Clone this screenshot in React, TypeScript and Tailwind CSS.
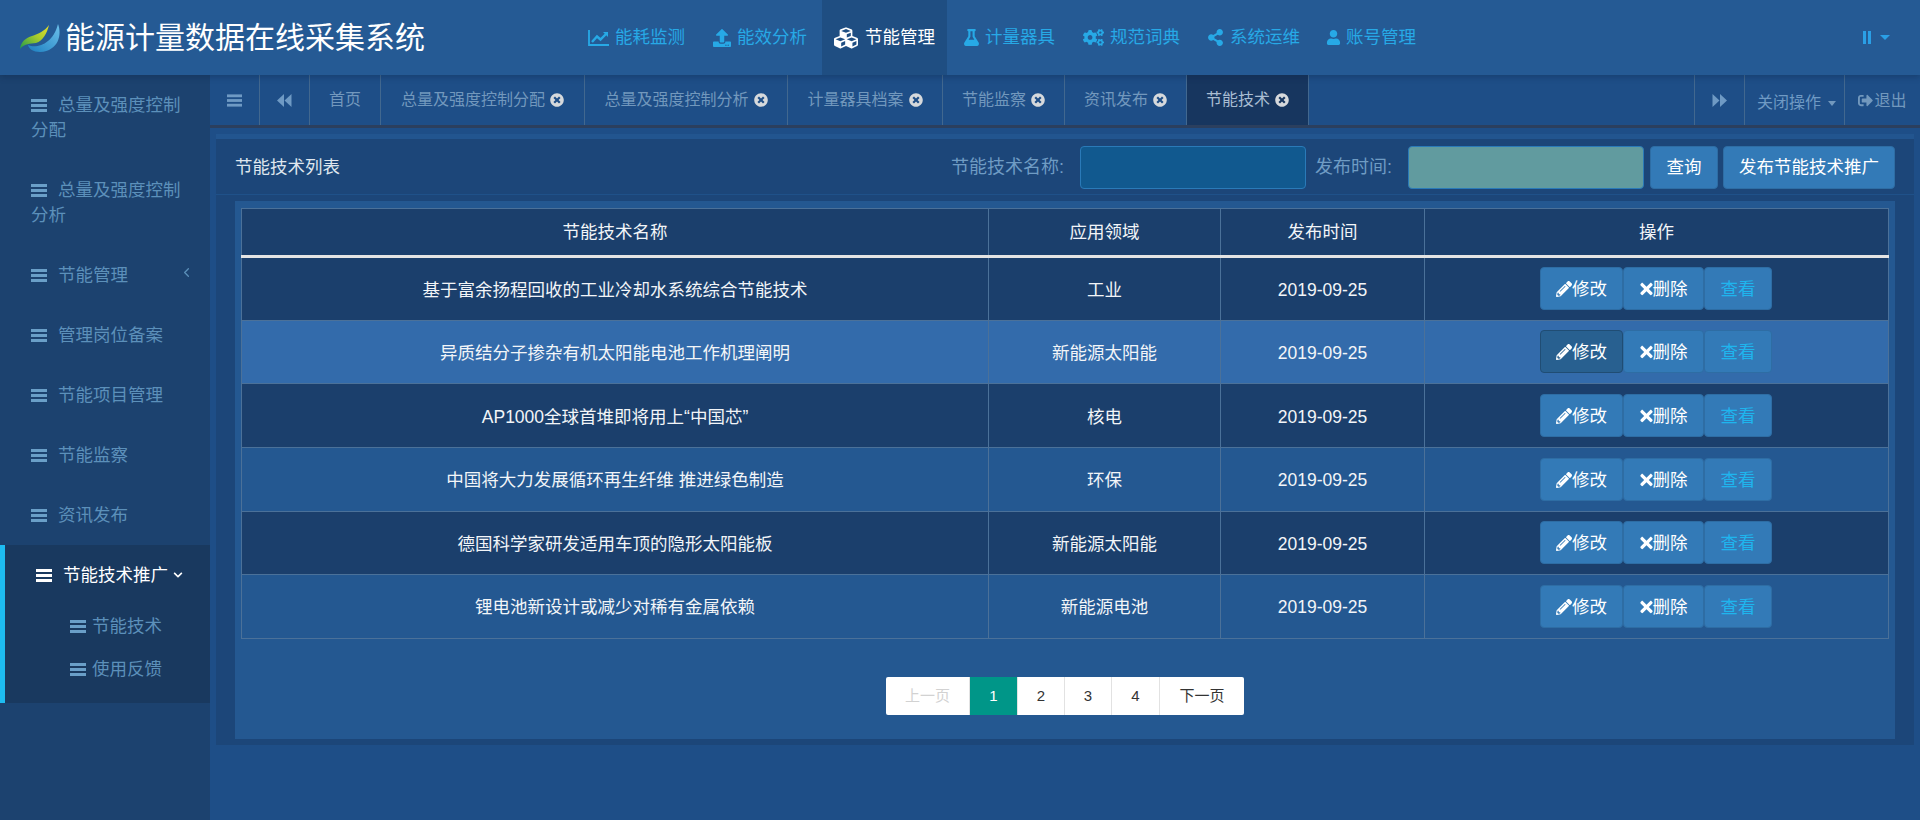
import type { ReactNode } from "react";
import {
  FaChevronDown,
  FaCogs,
  FaCubes,
  FaFlask,
  FaPencilAlt,
  FaShareAlt,
  FaSignOutAlt,
  FaTimes,
  FaTimesCircle,
  FaUpload,
  FaUser,
} from "react-icons/fa";
import { LuChevronLeft } from "react-icons/lu";

const rows = [
  ["基于富余扬程回收的工业冷却水系统综合节能技术", "工业"],
  ["异质结分子掺杂有机太阳能电池工作机理阐明", "新能源太阳能"],
  ["AP1000全球首堆即将用上“中国芯”", "核电"],
  ["中国将大力发展循环再生纤维 推进绿色制造", "环保"],
  ["德国科学家研发适用车顶的隐形太阳能板", "新能源太阳能"],
  ["锂电池新设计或减少对稀有金属依赖", "新能源电池"],
];

const Logo = () => (
  <svg width="44" height="30" viewBox="0 0 44 30" className="shrink-0">
    <defs>
      <linearGradient id="blueLeaf" x1="0" y1="1" x2="1" y2="0">
        <stop offset="0" stopColor="#1c7fc0" />
        <stop offset="1" stopColor="#6cc0ea" />
      </linearGradient>
      <linearGradient id="greenLeaf" x1="0" y1="1" x2="1" y2="0">
        <stop offset="0" stopColor="#1f9a4c" />
        <stop offset="0.55" stopColor="#a8cc2c" />
        <stop offset="1" stopColor="#e6dd2e" />
      </linearGradient>
    </defs>
    <path d="M40 1C44 11 41 28 22 29C15 29 11 26 10 22C19 26 35 21 40 1Z" fill="url(#blueLeaf)" />
    <path d="M31 2C27 8 20 11 14 13C8 15 3 18 2 26C7 20 12 21 18 20C25 18 29 10 31 2Z" fill="url(#greenLeaf)" />
  </svg>
);

const Bars = ({ className }: { className?: string }) => (
  <svg viewBox="0 0 16 13" fill="currentColor" className={className}>
    <rect y="0" width="16" height="3" />
    <rect y="5" width="16" height="3" />
    <rect y="10" width="16" height="3" />
  </svg>
);

const Skip = ({ flip }: { flip?: boolean }) => (
  <svg viewBox="0 0 15 13" fill="currentColor" className={`h-[13px] w-[15px] ${flip ? "rotate-180" : ""}`}>
    <polygon points="7,0 7,13 0,6.5" />
    <polygon points="14.5,0 14.5,13 7.5,6.5" />
  </svg>
);

const ChartLine = () => (
  <svg viewBox="0 0 21 16" fill="none" stroke="currentColor" className="mr-[6px] h-[16px] w-[21px]">
    <path d="M1 0V15H21" strokeWidth="1.8" />
    <path d="M4 12L9 6.5L12.5 9.5L18 4" strokeWidth="2.4" />
    <polygon points="15,2 20,2 20,7" fill="currentColor" stroke="none" />
  </svg>
);

const NavItem = ({ icon, label, active, className }: { icon: ReactNode; label: string; active?: boolean; className: string }) => (
  <div className={`flex h-[75px] shrink-0 items-center ${active ? "bg-[#1f4e82] text-white" : "text-[#27a9e6]"} ${className}`}>
    {icon}
    <span className="text-[17.5px]">{label}</span>
  </div>
);

const SideItem = ({ label, chevron }: { label: string; chevron?: boolean }) => (
  <div className="relative pb-[17px] pl-[31px] pr-[20px] pt-[18px] text-[17.5px] leading-[25px] text-[#5c90ba]">
    <Bars className="mr-[11px] inline-block h-[13px] w-[16px] align-[-1px] text-[#6a9fc8]" />
    {label}
    {chevron && <LuChevronLeft className="absolute right-[16px] top-[20px] h-[15px] w-[15px]" />}
  </div>
);

const Tab = ({ label, active, className }: { label: string; active?: boolean; className: string }) => (
  <div
    className={`flex h-[50px] items-center justify-center gap-[5px] border-r border-[#42688f] text-[16px] ${
      active ? "bg-[#17365f] text-[#a9bdd2]" : "text-[#7298bd]"
    } ${className}`}
  >
    <span>{label}</span>
    <FaTimesCircle className="h-[14px] w-[14px] text-[#d6d9dc]" />
  </div>
);

const TabButton = ({ children, className }: { children: ReactNode; className: string }) => (
  <div className={`flex h-[50px] items-center justify-center border-r border-[#42688f] text-[16px] text-[#6f9ac4] ${className}`}>
    {children}
  </div>
);

const ActionButton = ({ children, hover, className }: { children: ReactNode; hover?: boolean; className: string }) => (
  <button
    className={`flex h-[43px] items-center justify-center rounded-[4px] border pt-[1px] text-[17.5px] ${
      hover ? "border-[#204d74] bg-[#286090]" : "border-[#2e6da4] bg-[#337ab7]"
    } ${className}`}
  >
    {children}
  </button>
);

const PageCell = ({ children, className }: { children: ReactNode; className: string }) => (
  <div className={`flex h-[38px] items-center justify-center border-r border-[#e2e2e2] text-[15px] ${className}`}>
    {children}
  </div>
);

export default function App() {
  return (
    <div
      className="flex h-[820px] w-[1920px] flex-col overflow-hidden bg-[#1e4e87]"
      style={{ fontFamily: '"Liberation Sans", "Noto Sans CJK SC", sans-serif' }}
    >
      <header className="relative z-10 flex h-[75px] shrink-0 items-center bg-[#255a94] shadow-[0_2px_6px_rgba(10,30,60,0.3)]">
        <div className="flex w-[575px] shrink-0 items-center pl-[18px]">
          <Logo />
          <span className="ml-[3px] text-[30px] text-white">能源计量数据在线采集系统</span>
        </div>
        <NavItem className="w-[125px] pl-[13px]" icon={<ChartLine />} label="能耗监测" />
        <NavItem className="w-[122px] pl-[13px]" icon={<FaUpload className="mr-[6px] h-[18px] w-[18px]" />} label="能效分析" />
        <NavItem active className="w-[125px] pl-[12px]" icon={<FaCubes className="mr-[7px] h-[24px] w-[24px]" />} label="节能管理" />
        <NavItem className="w-[123px] pl-[16px]" icon={<FaFlask className="mr-[5px] h-[17px] w-[17px]" />} label="计量器具" />
        <NavItem className="w-[124px] pl-[13px]" icon={<FaCogs className="mr-[6px] h-[21px] w-[21px]" />} label="规范词典" />
        <NavItem className="w-[119px] pl-[13px]" icon={<FaShareAlt className="mr-[6px] h-[17px] w-[17px]" />} label="系统运维" />
        <NavItem className="pl-[13px]" icon={<FaUser className="mr-[5px] h-[15px] w-[15px]" />} label="账号管理" />
        <div className="ml-auto mr-[30px] flex items-center">
          <span className="h-[13px] w-[3px] bg-[#2a9fe6]" />
          <span className="ml-[2px] h-[13px] w-[3px] bg-[#2a9fe6]" />
          <span className="ml-[9px] h-0 w-0 border-x-[5px] border-t-[5px] border-x-transparent border-t-[#2a9fe6]" />
        </div>
      </header>

      <div className="flex min-h-0 flex-1">
        <aside className="w-[210px] shrink-0 bg-[#1c426f]">
          <SideItem label="总量及强度控制分配" />
          <SideItem label="总量及强度控制分析" />
          <SideItem label="节能管理" chevron />
          <SideItem label="管理岗位备案" />
          <SideItem label="节能项目管理" />
          <SideItem label="节能监察" />
          <SideItem label="资讯发布" />
          <div className="relative h-[158px] border-l-[5px] border-[#1dbcf2] bg-[#19395f]">
            <div className="flex h-[60px] items-center pl-[31px] text-[17.5px] text-white">
              <Bars className="mr-[11px] h-[13px] w-[16px]" />
              节能技术推广
              <FaChevronDown className="ml-[5px] h-[10px] w-[10px]" />
            </div>
            <div className="flex h-[43px] items-center pl-[65px] text-[17.5px] text-[#5c90ba]">
              <Bars className="mr-[6px] h-[13px] w-[16px] text-[#6a9fc8]" />
              节能技术
            </div>
            <div className="flex h-[43px] items-center pl-[65px] text-[17.5px] text-[#5c90ba]">
              <Bars className="mr-[6px] h-[13px] w-[16px] text-[#6a9fc8]" />
              使用反馈
            </div>
          </div>
        </aside>

        <main className="min-w-0 flex-1">
          <div className="flex h-[53px] border-b-[3px] border-[#2b3f5e] bg-[#1e4e87]">
            <TabButton className="w-[50px]"><Bars className="h-[13px] w-[15px]" /></TabButton>
            <TabButton className="w-[50px]"><Skip /></TabButton>
            <TabButton className="w-[71px] text-[#7298bd]">首页</TabButton>
            <Tab className="w-[204px]" label="总量及强度控制分配" />
            <Tab className="w-[203px]" label="总量及强度控制分析" />
            <Tab className="w-[155px]" label="计量器具档案" />
            <Tab className="w-[122px]" label="节能监察" />
            <Tab className="w-[122px]" label="资讯发布" />
            <Tab active className="w-[122px]" label="节能技术" />
            <div className="h-[50px] flex-1 border-r border-[#42688f]" />
            <TabButton className="w-[50px]"><Skip flip /></TabButton>
            <TabButton className="w-[100px] gap-[7px] pl-[4px] pt-[6px]">
              关闭操作
              <span className="h-0 w-0 border-x-[4px] border-t-[5px] border-x-transparent border-t-[#7298bd]" />
            </TabButton>
            <div className="flex h-[50px] w-[75px] items-center justify-center pt-[1px] text-[16px] text-[#7298bd]">
              <FaSignOutAlt className="mr-[1px] h-[15px] w-[15px]" />
              退出
            </div>
          </div>

          <div className="mx-[6px] mt-[6px] h-[611px] border-t-[5px] border-[#22558f] bg-[#1c4679]">
            <div className="flex h-[56px] items-center border-b border-[#1f5189] pl-[19px] pr-[19px] pt-[1px] text-[17.5px]">
              <span className="text-[#dfe6ee]">节能技术列表</span>
              <span className="ml-auto text-[18px] text-[#6f9cc4]">节能技术名称:</span>
              <div className="ml-[16px] h-[43px] w-[226px] rounded-[4px] border border-[#2a7ab8] bg-[#11598f]" />
              <span className="ml-[9px] text-[18px] text-[#6f9cc4]">发布时间:</span>
              <div className="ml-[16px] h-[43px] w-[236px] rounded-[4px] border border-[#2a7ab8] bg-[#619b9f]" />
              <button className="ml-[6px] h-[43px] w-[68px] rounded-[4px] border border-[#2e6da4] bg-[#337ab7] text-white">查询</button>
              <button className="ml-[5px] h-[43px] w-[172px] rounded-[4px] border border-[#2e6da4] bg-[#337ab7] text-white">发布节能技术推广</button>
            </div>

            <div className="mx-[19px] mt-[6px] h-[538px] bg-[#245891] pl-[6px] pr-[7px] pt-[7px]">
              <table className="w-[1647px] table-fixed border-collapse text-center text-[17.5px] text-[#f2f5f8]">
                <colgroup>
                  <col className="w-[747px]" />
                  <col className="w-[232px]" />
                  <col className="w-[204px]" />
                  <col className="w-[464px]" />
                </colgroup>
                <thead>
                  <tr className="h-[48px] border-b-[3px] border-b-[#e4e4e4] bg-[#1b3f6c]">
                    {["节能技术名称", "应用领域", "发布时间", "操作"].map((h) => (
                      <th key={h} className="border-x border-t border-[#4b7199] font-normal">
                        {h}
                      </th>
                    ))}
                  </tr>
                </thead>
                <tbody>
                  {rows.map((r, i) => {
                    const hover = i === 1;
                    const bg = hover ? "bg-[#336bab]" : i % 2 === 0 || i === 4 ? "bg-[#1b3f6c]" : "bg-[#245891]";
                    return (
                      <tr key={r[0]} className={`h-[63.67px] ${bg}`}>
                        <td className="border border-[#4b7199] pt-[2px]">{r[0]}</td>
                        <td className="border border-[#4b7199] pt-[2px]">{r[1]}</td>
                        <td className="border border-[#4b7199] pt-[2px]">2019-09-25</td>
                        <td className="border border-[#4b7199]">
                          <div className="flex justify-center pr-[1px]">
                            <ActionButton hover={hover} className="w-[83px] text-white">
                              <FaPencilAlt className="h-[16px] w-[16px]" />
                              修改
                            </ActionButton>
                            <ActionButton className="w-[81px] text-white">
                              <FaTimes className="h-[18px] w-[13px]" />
                              删除
                            </ActionButton>
                            <ActionButton className="w-[68px] text-[#1fb5ee]">查看</ActionButton>
                          </div>
                        </td>
                      </tr>
                    );
                  })}
                </tbody>
              </table>

              <div className="mt-[38px] flex justify-center pl-[1px]">
                <div className="flex overflow-hidden rounded-[2px] bg-white">
                  <PageCell className="w-[84px] text-[#d2d2d2]">上一页</PageCell>
                  <PageCell className="w-[48px] border-[#009688] bg-[#009688] text-white">1</PageCell>
                  <PageCell className="w-[47px] text-[#333]">2</PageCell>
                  <PageCell className="w-[47px] text-[#333]">3</PageCell>
                  <PageCell className="w-[48px] text-[#333]">4</PageCell>
                  <PageCell className="w-[84px] border-r-0 text-[#333]">下一页</PageCell>
                </div>
              </div>
            </div>
          </div>
        </main>
      </div>
    </div>
  );
}
